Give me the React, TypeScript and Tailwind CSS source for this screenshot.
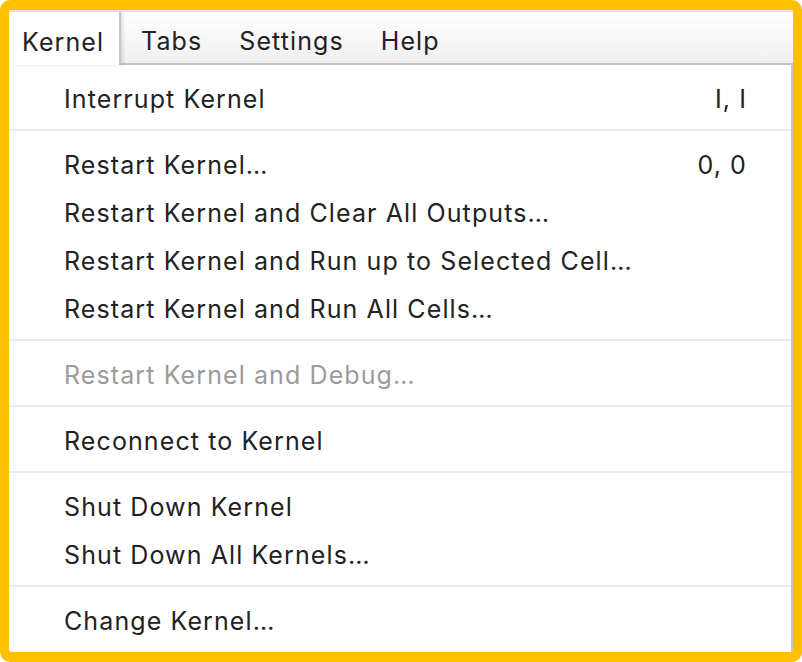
import React from 'react';

type Item = { label: string; shortcut?: string; disabled?: boolean };

const groups: Item[][] = [
  [{ label: 'Interrupt Kernel', shortcut: 'I, I' }],
  [
    { label: 'Restart Kernel…', shortcut: '0, 0' },
    { label: 'Restart Kernel and Clear All Outputs…' },
    { label: 'Restart Kernel and Run up to Selected Cell…' },
    { label: 'Restart Kernel and Run All Cells…' },
  ],
  [{ label: 'Restart Kernel and Debug…', disabled: true }],
  [{ label: 'Reconnect to Kernel' }],
  [{ label: 'Shut Down Kernel' }, { label: 'Shut Down All Kernels…' }],
  [{ label: 'Change Kernel…' }],
];

const font = { fontFamily: 'Inter, "Noto Sans", sans-serif' };

export default function App() {
  return (
    <div className="w-[802px] h-[662px] bg-[#fec000] rounded-[10px] pt-[10px] pb-[10px] px-[9px]" style={font}>
      <div className="h-full flex flex-col bg-white rounded-[3px] overflow-hidden">
        {/* menu bar */}
        <div className="h-[55px] flex items-stretch border-t-2 border-[#e6e6e6] bg-gradient-to-b from-white to-[#efefef] text-[25px] tracking-[1.1px] text-[#222]">
          <div className="w-[112px] pl-[13px] pt-[8px] flex items-center bg-white border-r-2 border-[#c6c6c6] shadow-[2px_0_3px_rgba(0,0,0,0.12)] z-10">
            Kernel
          </div>
          <div className="flex-1 flex items-center pt-[8px] border-b-2 border-[#c4c4c4]">
            <span className="ml-[20px]">Tabs</span>
            <span className="ml-[37px]">Settings</span>
            <span className="ml-[37px]">Help</span>
          </div>
        </div>
        {/* dropdown */}
        <div className="flex-1 flex flex-col border-r-2 border-[#c4c4c4] text-[25px] tracking-[1.1px] text-[#222]">
          {groups.map((g, i) => (
            <div key={i} className={i > 0 ? 'border-t-2 border-[#ebebeb] py-2' : 'py-2'}>
              {g.map((it) => (
                <div key={it.label} className={`h-[48px] flex items-center justify-between pl-[55px] pr-[44px] pt-[6px] ${it.disabled ? 'text-[#9b9b9b]' : ''}`}>
                  <span>{it.label}</span>
                  {it.shortcut && <span>{it.shortcut}</span>}
                </div>
              ))}
            </div>
          ))}
        </div>
      </div>
    </div>
  );
}
